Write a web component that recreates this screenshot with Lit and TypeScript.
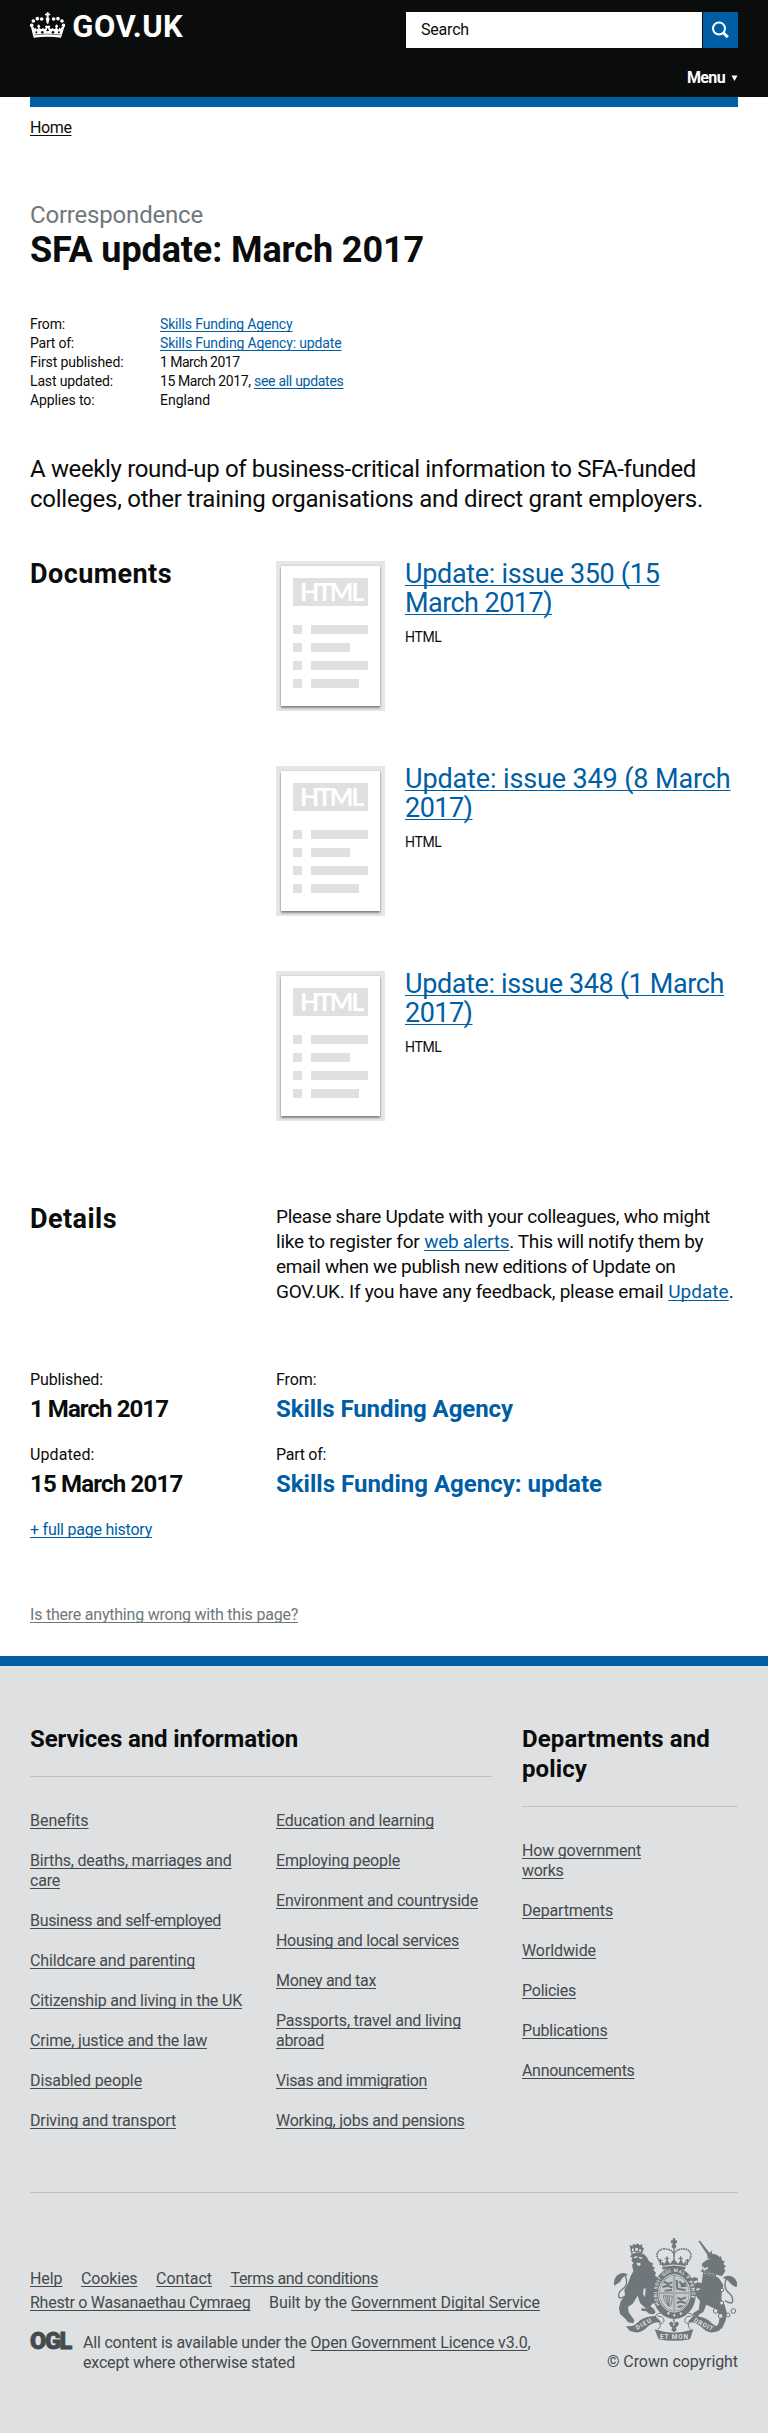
import { LitElement, html, svg, css } from "lit";
import { customElement, property } from "lit/decorators.js";

/** One unbroken run of text, tracked so that it measures `to` pixels wide. */
@customElement("tracked-text")
class TrackedText extends LitElement {
  static styles = css`
    :host { white-space: nowrap; }
  `;
  @property({ type: Number }) to = 0;

  protected firstUpdated() {
    const count = (this.textContent ?? "").length;
    const natural = this.getBoundingClientRect().width;
    if (count && this.to) this.style.letterSpacing = `${((this.to - natural) / count).toFixed(3)}px`;
  }

  render() {
    return html`<slot></slot>`;
  }
}

type Line = [text: string, width: number];

const run = (text: string, width: number) => html`<tracked-text to=${width}>${text}</tracked-text>`;
const lines = (items: Line[]) => items.map(([t, w], i) => html`${i ? html`<br />` : ""}${run(t, w)}`);
const link = (...items: Line[]) => html`<a href="#">${lines(items)}</a>`;

const issues: Line[][] = [
  [["Update: issue 350 (15", 254.5], ["March 2017)", 147]],
  [["Update: issue 349 (8 March", 325.5], ["2017)", 67.5]],
  [["Update: issue 348 (1 March", 319], ["2017)", 67.5]],
];

const services: Line[][][] = [
  [
    [["Benefits", 58]],
    [["Births, deaths, marriages and", 201.5], ["care", 30]],
    [["Business and self-employed", 191]],
    [["Childcare and parenting", 165]],
    [["Citizenship and living in the UK", 212]],
    [["Crime, justice and the law", 177]],
    [["Disabled people", 112]],
    [["Driving and transport", 146]],
  ],
  [
    [["Education and learning", 158]],
    [["Employing people", 124]],
    [["Environment and countryside", 202]],
    [["Housing and local services", 183]],
    [["Money and tax", 100]],
    [["Passports, travel and living", 185], ["abroad", 48]],
    [["Visas and immigration", 151]],
    [["Working, jobs and pensions", 188.5]],
  ],
];

const departments: Line[][] = [
  [["How government", 119], ["works", 41.5]],
  [["Departments", 91]],
  [["Worldwide", 74]],
  [["Policies", 54]],
  [["Publications", 85.5]],
  [["Announcements", 112.5]],
];

const crown = html`<svg class="crown" viewBox="31 36 106 79" fill="#fff" aria-hidden="true">
  <path d="M81 37h6v4h5v5h-5l1 4h-8l1-4h-5v-5h5z" />
  <path d="M84 49l6 7-4 15h-4l-4-15z" />
  ${[[66, 57, 5.5], [53, 56, 5.5], [41, 63, 5.5], [36, 76, 5.5]].map(
    ([x, y, r]) => svg`<circle cx=${x} cy=${y} r=${r} /><circle cx=${168 - x} cy=${y} r=${r} />`,
  )}
  <path d="M34 82l7-2 4 6 4-3 2 6 5-5-4-5 5-6 5 6-3 5 6 4 4-4 5 3 4-2-2-8h16l-2 8 4 2 5-3 4 4 6-4-3-5 5-6 5 6-4 5 5 5 2-6 4 3 4-6 7 2-10 31q-40-6-82 0z" />
  <g fill="#0b0c0c">
    <circle cx="50" cy="97" r="3" /><circle cx="68" cy="97" r="4" /><circle cx="100" cy="97" r="4" /><circle cx="118" cy="97" r="3" />
    <path d="M44 104q40-6 80 0l-1 2q-39-6-78 0z" />
    <path d="M79 92l3-3v-4h4v4l3 3-5 2z" />
  </g>
</svg>`;

const arms = html`<svg class="arms" viewBox="39 53 375 309" fill="#6f777b" aria-hidden="true">
  <!-- lion -->
  <path d="M92 92l-3-19 8 5 3-8 8 4 5-6 5 7 9-3-1 8 6 4-6 16q-17-9-32-4z" />
  <path fill="#dee0e2" d="M96 84l6 2-2 8-4-1zm10-2l8 1-1 9-7-1zm12 4l6 2-2 7-5-2z" />
  <path d="M94 102l17-6 20 5 10 10 6 12 13 7-4 6 9 7-5 6 8 8-3 9 9 6 4 8-8 5-9 18 7 21-6 13 11 5-2 10-12-3-8 9 11 8 5 10-6 6-14-2-8-7-15-2 1-8 14 3-19-18-7-22-15 24-14 10 2 16 17 24-3 9-16-3-7-10-17-15-3-18 5-20 13-18-2-16 12-22 7-20 8-14-4-19 5-6-7-7 4-9-8-3 9-12-6-6z" />
  <path fill="#dee0e2" d="M101 110l10-3 2 4-9 3zm17-1l10 3-3 4-8-2zm-8 18l11 1 1 6-6 3-6-5zM131 205l6-1-2 26-6-9z" />
  <path fill="none" stroke="#6f777b" stroke-width="4" d="M79 226q-24 14-23 0 0-12 12-20 12-8 12-22 0-21-14-22-11 0-18 18" />
  <path d="M42 196q-2-25 15-34 14-8 27 1-10 3-17 10-5 13-17 19z" />
  <!-- unicorn -->
  <path d="M295 62l5-1 31 40-7 5z" />
  <path d="M322 103l15-13-2 10q17 1 25 11l2-5 5 15 8 2-5 7 8 9-6 3 4 10-10 16-45-14 3-14-11 4-8-6 2-9 16-12z" />
  <path fill="#dee0e2" d="M321 115l8-1-3 5zM306 139l6-1-4 4z" />
  <path fill="none" stroke="#6f777b" stroke-width="4" d="M303 151l53 24M307 146l4 10 8-7 3 12 10-7 3 12 10-6 2 13" />
  <path d="M309 158l49 17 12 19-4 18-2 24 10 17 7 27-4 20-10 23-13 7-7-7 9-15 4-22-14-20-27-13-9 22-12 7-4 7-17-4 3-7 16-10 4-25-11-15-9-19-19 4-8-10 3-12-5-17 8-7 10 3 3 9 10-9 12 4-1 12 12 2z" />
  <path fill="#dee0e2" d="M280 184l11-4 2 5-8 5zM287 206l12-3 1 4-8 4z" />
  <path fill="none" stroke="#6f777b" stroke-width="4" d="M375 241q24 15 23-2 0-12-11-21-12-9-12-24 0-23 15-23 11 0 20 20" />
  <path d="M411 200q2-26-17-32-15-5-26 5 12 1 17 9 8 12 20 17z" />
  <g fill="#dee0e2" stroke="#6f777b" stroke-width="3">
    <circle cx="366" cy="209" r="5" /><circle cx="365" cy="248" r="6" /><circle cx="347" cy="272" r="7" />
    <circle cx="362" cy="287" r="7" /><circle cx="384" cy="284" r="6" /><circle cx="400" cy="272" r="7" />
  </g>
  <!-- crown -->
  <g fill="none" stroke="#6f777b">
    <path stroke-width="5" stroke-dasharray="5 2" d="M188 133q-23-22-15-36 8-14 25-11 18 2 24 15 6-13 24-15 18-2 25 11 7 14-15 36" />
    <path stroke-width="4" d="M222 82v46M181 116v18M262 116v18M201 108v22M242 108v22" />
    <path stroke-width="3" d="M194 115h14M235 115h14M176 120h11M256 120h11" />
  </g>
  <path d="M218 54h8l-1 6h6v9h-6l2 4q6 7-5 12-11-5-5-12l2-4h-6v-9h6z" />
  <path d="M185 122l8 8 8-12 9 12 12-14 12 14 9-12 8 12 8-8-4 26q-34-9-67 0z" />
  <path fill="none" stroke="#dee0e2" stroke-width="3" d="M189 138q34-8 66 0" />
  <path d="M193 150q29-9 59 0l-2 8q-28-8-55 0z" />
  <!-- garter and shield -->
  <ellipse cx="223" cy="219" rx="65" ry="77" />
  <ellipse cx="223" cy="219" rx="47" ry="56" fill="none" stroke="#dee0e2" stroke-width="3" />
  <ellipse cx="223" cy="219" rx="44" ry="53" fill="#c3c8ca" />
  <path fill="none" stroke="#6f777b" stroke-width="5" d="M223 166v106M179 218h88" />
  <path fill="none" stroke="#dee0e2" stroke-width="2" d="M223 166v106M179 218h88" />
  <path fill="none" stroke="#6f777b" stroke-width="6" d="M191 184l14 7 12-5M188 200l14-4 15 6M194 211l22-2M238 183l7 9 14-3M230 179l2 26 25 5M242 198l18-2M232 232l10 5 16-6M230 248l12-4 15 4M233 260l14-3" />
  <path fill="none" stroke="#6f777b" stroke-width="2.5" d="M190 226l27 1-3 26q-5 11-11 1-13-11-13-28M196 227l9 30M202 227l4 30M208 227l0 29" />
  <path id="motto" fill="none" d="M179 253a52 64 0 1 1 88 0" />
  <text class="motto"><textPath href="#motto" textLength="232">HONI SOIT QUI MAL Y PENSE</textPath></text>
  <path fill="#dee0e2" d="M201 278l5-4 4 6-5 3zM219 285l4-5 4 5-4 4zM238 280l5-5 4 5-5 4z" />
  <!-- compartment and scroll -->
  <path fill="#dee0e2" stroke="#6f777b" stroke-width="3" d="M184 278q-17 2-18 11-1 8 11 17 9 10-3 21M262 278q17 2 18 11 1 8-11 17-9 10 3 21M172 287q15 0 19 8 4 12-10 16M274 287q-15 0-19 8-4 12 10 16" />
  <path d="M221 294q6 6 3 14 6-6 11-2 4 7-5 14h-3l3 10-8 6-8-6 3-10h-3q-9-7-5-14 5-4 11 2-3-8 1-14z" />
  <path fill="#dee0e2" d="M220 303l3 0 0 14-3 0z" />
  <path d="M77 317q23 3 35-10 18-19 54-20l18 19q-26-3-43 15-18 20-40 14l-12-4z" />
  <path d="M369 317q-23 3-35-10-18-19-54-20l-18 19q26-3 43 15 18 20 40 14l12-4z" />
  <path d="M164 327q57 20 116 0l-10 30q-48 9-94 0z" />
  <g class="scroll">
    <text transform="translate(112 329) rotate(-30)" textLength="50">DIEU</text>
    <text transform="translate(280 304) rotate(27)" textLength="62">DROIT</text>
    <text x="180" y="355" textLength="84">ET MON</text>
  </g>
</svg>`;

@customElement("app-root")
class AppRoot extends LitElement {
  static styles = css`
    :host {
      display: block;
      font: 16px/20px Roboto, "Liberation Sans", Arial, sans-serif;
      color: #0b0c0c;
      background: #fff;
    }
    * { box-sizing: border-box; }
    h1, h2, p, dl, dd, ul { margin: 0; padding: 0; }
    ul { list-style: none; }
    a {
      color: #005ea5;
      text-decoration: underline;
      text-decoration-thickness: 1px;
      text-underline-offset: 2px;
      text-decoration-skip-ink: none;
    }
    .header {
      height: 97px;
      padding: 12px 30px 0;
      background: #0b0c0c;
      color: #fff;
      display: grid;
      grid-template-columns: 1fr 332px;
      align-content: start;
    }
    .brand { display: flex; gap: 7px; height: 62px; }
    .crown { width: 35.3px; height: 26.3px; }
    .brand-name { font-size: 31px; line-height: 30px; font-weight: 700; }
    .search { display: flex; gap: 1px; height: 36px; }
    .field { width: 296px; height: 36px; background: #fff; color: #0b0c0c; padding: 8px 15px; }
    .submit { width: 35px; height: 36px; background: #005ea5; }
    .submit svg { display: block; }
    .menu {
      grid-column: 2;
      display: flex;
      justify-content: flex-end;
      align-items: center;
      gap: 6px;
      height: 20px;
      margin-top: -6px;
      font-weight: 700;
    }
    .stripe { height: 10px; margin: 0 30px; background: #005ea5; }
    main { padding: 11px 30px 31px; }
    .crumbs a { color: #0b0c0c; }
    .kind { margin-top: 62px; font-size: 24px; line-height: 30px; color: #6f777b; }
    h1 { font-size: 36px; line-height: 40px; }
    .meta {
      display: grid;
      grid-template-columns: 130px 1fr;
      margin-top: 45px;
      font-size: 14px;
      line-height: 19px;
    }
    .lead { margin-top: 44px; font-size: 24px; line-height: 30px; }
    .section { display: grid; grid-template-columns: 246px 1fr; }
    .documents { margin-top: 45px; }
    .section h2 { padding-top: 1px; font-size: 27px; line-height: 29px; }
    .issues { display: grid; gap: 53px; }
    .issue { display: flex; gap: 20px; height: 152px; }
    .issue-title { padding-top: 1px; font-size: 27px; line-height: 29px; }
    .format { margin-top: 9px; font-size: 14px; }
    .thumb { display: block; flex: none; margin-top: 2px; width: 109px; height: 150px; background: #e5e6e6; padding: 5px; }
    .sheet {
      width: 99px;
      height: 140px;
      padding: 12px 12px 0;
      background: #fff;
      box-shadow: 0 2px 2px rgba(0, 0, 0, 0.4), 0 0 2px rgba(0, 0, 0, 0.2);
    }
    .badge {
      height: 28px;
      margin-bottom: 19px;
      padding-left: 7px;
      background: #dee0e2;
      color: #fff;
      font-family: Lato, Roboto, sans-serif;
      font-size: 25px;
      line-height: 27px;
      font-weight: 700;
    }
    .row { display: flex; gap: 9px; margin-bottom: 9px; }
    .row::before { content: ""; width: 9px; height: 9px; background: #dee0e2; }
    .bar { height: 9px; background: #dee0e2; }
    .details { margin-top: 83px; }
    .body { font-size: 19px; line-height: 25px; }
    .facts { display: grid; grid-template-columns: 246px 1fr; row-gap: 21px; margin-top: 66px; }
    .fact-value { margin-top: 4px; font-size: 24px; line-height: 30px; font-weight: 700; }
    .fact-value a { text-decoration: none; }
    .history { margin-top: 21px; }
    .problem { margin-top: 65px; }
    .problem a { color: #6f777b; }
    .footer { height: 777px; border-top: 10px solid #005ea5; background: #dee0e2; padding: 58px 30px 0; color: #454a4c; }
    .footer a { color: #454a4c; }
    .groups { display: grid; grid-template-columns: 461.5px 216px; justify-content: space-between; height: 469px; border-bottom: 1px solid #bfc1c3; }
    .groups h2 { padding-bottom: 22px; border-bottom: 1px solid #bfc1c3; font-size: 24px; line-height: 30px; color: #0b0c0c; }
    .columns { display: grid; grid-template-columns: 246px 1fr; }
    .links { display: grid; gap: 20px; align-content: start; margin-top: 34px; }
    .legal { display: flex; justify-content: space-between; }
    .legal-text { padding-top: 74px; line-height: 24px; }
    .inline { display: flex; gap: 18.5px; }
    .licence { display: flex; gap: 12px; margin-top: 18px; line-height: 20px; }
    .ogl { width: 41px; font-size: 23.5px; line-height: 17px; font-weight: 900; -webkit-text-stroke: 0.8px #454a4c; }
    .crest { display: flex; flex-direction: column; align-items: flex-end; padding-top: 45px; gap: 11px; }
    .arms { display: block; width: 125px; height: 103px; }
    .motto { font-size: 14px; font-weight: 700; fill: #dee0e2; }
    .scroll { font-size: 19px; font-weight: 700; fill: #dee0e2; }
  `;

  private thumb() {
    return html`<div class="thumb"><div class="sheet">
      <div class="badge">${run("HTML", 62)}</div>
      ${[57, 39, 57, 48].map((w) => html`<div class="row"><div class="bar" style="width:${w}px"></div></div>`)}
    </div></div>`;
  }

  private list(items: Line[][]) {
    return html`<ul class="links">${items.map((i) => html`<li>${link(...i)}</li>`)}</ul>`;
  }

  render() {
    return html`
      <header class="header">
        <div class="brand">${crown}<span class="brand-name">${run("GOV.UK", 111)}</span></div>
        <div class="search">
          <div class="field">${run("Search", 48)}</div>
          <div class="submit">
            <svg width="35" height="36" fill="none" stroke="#fff">
              <circle cx="16" cy="16.5" r="6" stroke-width="2" />
              <path d="M20.3 20.8l4.5 4.5" stroke-width="3" />
            </svg>
          </div>
        </div>
        <div class="menu">${run("Menu", 38)}<svg width="7" height="6" fill="#fff"><path d="M0.5 0.5h6L3.5 6z" /></svg></div>
      </header>
      <div class="stripe"></div>
      <main>
        <p class="crumbs">${link(["Home", 41.5])}</p>
        <p class="kind">${run("Correspondence", 173)}</p>
        <h1>${run("SFA update: March 2017", 394)}</h1>
        <dl class="meta">
          <dt>${run("From:", 35)}</dt><dd>${link(["Skills Funding Agency", 132.5])}</dd>
          <dt>${run("Part of:", 44)}</dt><dd>${link(["Skills Funding Agency: update", 181.5])}</dd>
          <dt>${run("First published:", 93.5)}</dt><dd>${run("1 March 2017", 79.5)}</dd>
          <dt>${run("Last updated:", 83)}</dt><dd>${run("15 March 2017,", 90.5)} ${link(["see all updates", 89.5])}</dd>
          <dt>${run("Applies to:", 64.5)}</dt><dd>${run("England", 50)}</dd>
        </dl>
        <p class="lead">${lines([
          ["A weekly round-up of business-critical information to SFA-funded", 666],
          ["colleges, other training organisations and direct grant employers.", 673],
        ])}</p>
        <section class="section documents">
          <h2>${run("Documents", 142)}</h2>
          <div class="issues">
            ${issues.map((title) => html`<div class="issue">
              ${this.thumb()}
              <div>
                <div class="issue-title">${link(...title)}</div>
                <div class="format">${run("HTML", 36.5)}</div>
              </div>
            </div>`)}
          </div>
        </section>
        <section class="section details">
          <h2>${run("Details", 87)}</h2>
          <p class="body">
            ${run("Please share Update with your colleagues, who might", 434)}<br />
            ${run("like to register for", 143.5)} ${link(["web alerts", 85])}${run(". This will notify them by", 194)}<br />
            ${run("email when we publish new editions of Update on", 399.5)}<br />
            ${run("GOV.UK. If you have any feedback, please email", 387.5)} ${link(["Update", 60.5])}.
          </p>
        </section>
        <dl class="facts">
          <div><dt>${run("Published:", 73)}</dt><dd class="fact-value">${run("1 March 2017", 138)}</dd></div>
          <div><dt>${run("From:", 40.5)}</dt><dd class="fact-value">${link(["Skills Funding Agency", 237])}</dd></div>
          <div><dt>${run("Updated:", 64.5)}</dt><dd class="fact-value">${run("15 March 2017", 152.5)}</dd></div>
          <div><dt>${run("Part of:", 50)}</dt><dd class="fact-value">${link(["Skills Funding Agency: update", 326])}</dd></div>
        </dl>
        <p class="history">${link(["+ full page history", 122])}</p>
        <p class="problem">${link(["Is there anything wrong with this page?", 268])}</p>
      </main>
      <footer class="footer">
        <div class="groups">
          <section>
            <h2>${run("Services and information", 268)}</h2>
            <div class="columns">${services.map((c) => this.list(c))}</div>
          </section>
          <section>
            <h2>${lines([["Departments and", 188], ["policy", 65]])}</h2>
            ${this.list(departments)}
          </section>
        </div>
        <div class="legal">
          <div class="legal-text">
            <div class="inline">${link(["Help", 32.5])}${link(["Cookies", 56.5])}${link(["Contact", 56])}${link(["Terms and conditions", 147.5])}</div>
            <div class="inline">${link(["Rhestr o Wasanaethau Cymraeg", 220.5])}<span>${run("Built by the", 78)} ${link(["Government Digital Service", 189])}</span></div>
            <div class="licence">
              <span class="ogl">${run("OGL", 41)}</span>
              <span>${run("All content is available under the", 223.5)} ${link(["Open Government Licence v3.0", 217])},<br />${run("except where otherwise stated", 212)}</span>
            </div>
          </div>
          <div class="crest">${arms}<span>${run("© Crown copyright", 131)}</span></div>
        </div>
      </footer>
    `;
  }
}
